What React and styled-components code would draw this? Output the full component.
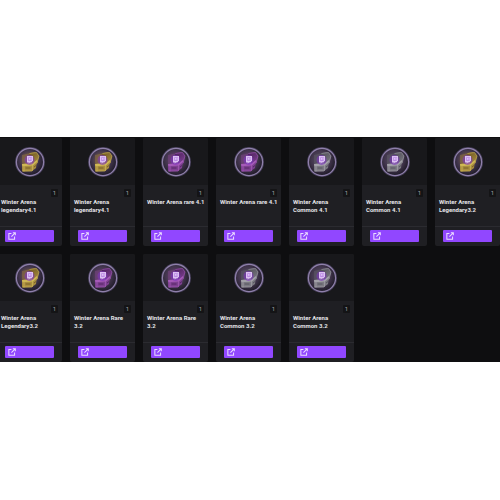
import styled, { createGlobalStyle } from "styled-components";

const GlobalStyle = createGlobalStyle`
  body {
    margin: 0;
    background: #fff;
    font-family: Roboto, "Liberation Sans", sans-serif;
  }
`;
const Page = styled.main`
  padding: 137px 0;
`;
const Gallery = styled.section`
  background: #0e0e10;
  padding-top: 1px;
  overflow: hidden;
`;
const Grid = styled.ul`
  display: grid;
  grid-template-columns: repeat(7, minmax(0, 1fr));
  gap: 8px;
  margin: 0 0 0 -3px;
  padding: 0;
  list-style: none;
`;
const Card = styled.li`
  display: flex;
  flex-direction: column;
  border-radius: 2px;
  overflow: hidden;
  background: #1f1f23;
`;
const Preview = styled.div`
  display: flex;
  justify-content: center;
  padding: 8px 0 7px;
  background: #18181b;
`;
const Info = styled.div`
  display: flex;
  flex-direction: column;
  height: 37px;
  padding: 4px 2px 0 4px;
`;
const Count = styled.span`
  align-self: flex-end;
  width: 7px;
  margin: 0 2px 1px 0;
  border-radius: 1px;
  background: #141416;
  color: #a0a0a6;
  font-size: 6px;
  line-height: 8px;
  text-align: center;
`;
const Title = styled.h2`
  margin: 0;
  color: #e4e4e8;
  font-size: 6px;
  font-weight: 700;
  line-height: 8px;
`;
const Footer = styled.div`
  display: flex;
  padding: 3px 8px 4px;
  border-top: 1px solid #2b2b30;
`;
const OpenLink = styled.a`
  display: flex;
  flex: 1;
  align-items: center;
  height: 12px;
  padding-left: 3px;
  border-radius: 1px;
  background: #9147ff;
`;

const palettes = {
  legendary: { light: "#cfb855", mid: "#a88d40", dark: "#6b5420", glow: "#8a6c42" },
  rare: { light: "#a55ab8", mid: "#7d4090", dark: "#4a2059", glow: "#74427f" },
  common: { light: "#a3a1a9", mid: "#7b7982", dark: "#4d4b55", glow: "#5c5766" },
};

const ChestBadge = ({ tier, id }) => {
  const c = palettes[tier];

  return (
    <svg width="32" height="32" viewBox="0 0 32 32" aria-hidden="true">
      <defs>
        <radialGradient id={`glow-${id}`} cx="0.45" cy="0.42" r="0.6">
          <stop offset="0" stopColor={c.glow} />
          <stop offset="0.6" stopColor="#41354c" />
          <stop offset="1" stopColor="#201b29" />
        </radialGradient>
        <linearGradient id={`lid-${id}`} x1="0" y1="0" x2="0.6" y2="1">
          <stop offset="0" stopColor={c.dark} />
          <stop offset="1" stopColor={c.mid} />
        </linearGradient>
      </defs>
      <circle cx="16" cy="16" r="15" fill="#463e59" />
      <circle cx="16" cy="16" r="13" fill={`url(#glow-${id})`} />
      <circle cx="16" cy="16" r="13.6" fill="none" stroke="#8f80aa" strokeWidth="1.2" />
      {/* light beam and open lid */}
      <path d="M8 18 8 9l13-3 3 11z" fill={c.glow} opacity="0.6" />
      <path d="M15 8q4-3 8-1l2 3-2 8-7 1z" fill={`url(#lid-${id})`} />
      <path d="M15.500 7.500l7-1 2.500 3.500L23 17" fill="none" stroke={c.light} strokeWidth="0.6" />
      {/* chest */}
      <path d="M8 18l11-1 4-3-1 8-4 3-10 .5z" fill={c.mid} />
      <path d="M8 18l11-1 4-3v2l-4 3.500-10.600.8z" fill={c.light} />
      <path d="M18.500 19v6M10 20v5.400M9 25h9" stroke={c.light} strokeWidth="0.7" />
      <path d="M11.500 22h5M20 21l2-1.500" stroke={c.dark} strokeWidth="0.8" />
      <circle cx="15.500" cy="14" r="5" fill="#7c35bd" opacity="0.6" />
      <path d="M13 10h6v4.700l-1.700 1.700h-1.400l-1.200 1.300v-1.300H13z" fill="#dcc0f2" />
      <path d="M14.200 11.200h3.700v3l-.9.9h-2.800z" fill="#bb88e4" />
      <path d="M15.500 12v1.800M17 12v1.800" stroke="#f4e8ff" strokeWidth="0.600" />
    </svg>
  );
};

const OpenIcon = () => (
  <svg width="8" height="8" viewBox="0 0 14 14" fill="none" stroke="#eadcff" strokeWidth="1.800" aria-hidden="true">
    <path d="M6 2.500H1.500v10h10V8" />
    <path d="M8.500 1.200h4.300v4.300M12.500 1.500 6 8" />
  </svg>
);

const badges = [
  { name: "Winter Arena legendary4.1", tier: "legendary" },
  { name: "Winter Arena legendary4.1", tier: "legendary" },
  { name: "Winter Arena rare 4.1", tier: "rare" },
  { name: "Winter Arena rare 4.1", tier: "rare" },
  { name: "Winter Arena Common 4.1", tier: "common" },
  { name: "Winter Arena Common 4.1", tier: "common" },
  { name: "Winter Arena Legendary3.2", tier: "legendary" },
  { name: "Winter Arena Legendary3.2", tier: "legendary" },
  { name: "Winter Arena Rare 3.2", tier: "rare" },
  { name: "Winter Arena Rare 3.2", tier: "rare" },
  { name: "Winter Arena Common 3.2", tier: "common" },
  { name: "Winter Arena Common 3.2", tier: "common" },
];

export default function App() {
  return (
    <Page>
      <GlobalStyle />
      <Gallery>
        <Grid>
          {badges.map((badge, index) => (
            <Card key={index}>
              <Preview>
                <ChestBadge tier={badge.tier} id={index} />
              </Preview>
              <Info>
                <Count>1</Count>
                <Title>{badge.name}</Title>
              </Info>
              <Footer>
                <OpenLink href="#" aria-label={`Open ${badge.name}`}>
                  <OpenIcon />
                </OpenLink>
              </Footer>
            </Card>
          ))}
        </Grid>
      </Gallery>
    </Page>
  );
}
